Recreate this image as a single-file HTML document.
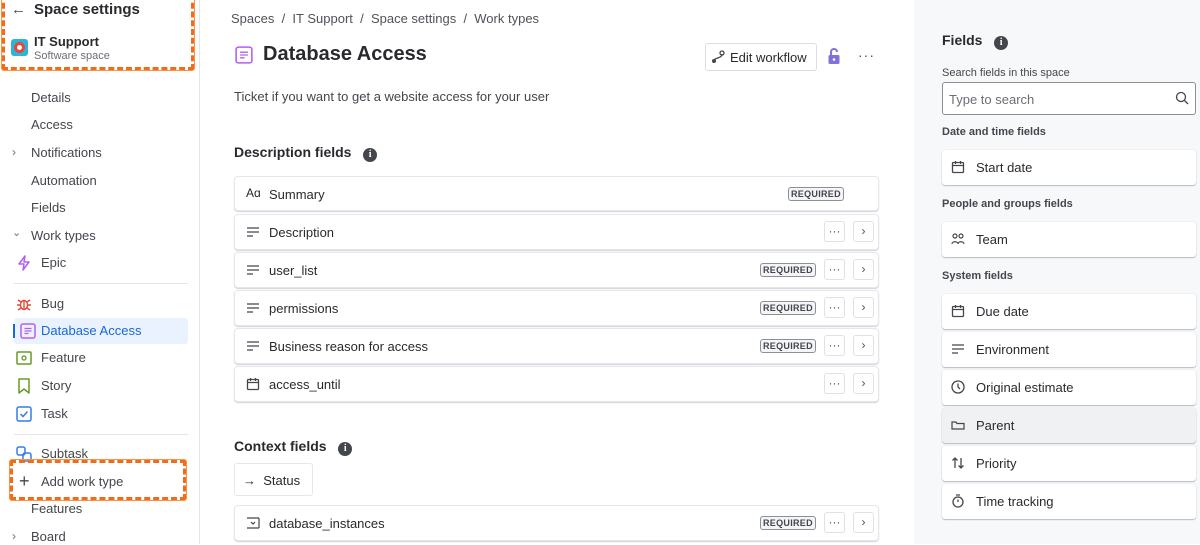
<!DOCTYPE html>
<html><head><meta charset="utf-8"><style>
*{box-sizing:border-box;margin:0;padding:0}
body{width:1200px;height:544px;overflow:hidden;background:#fff;font-family:"Liberation Sans",sans-serif;color:#292a2e;position:relative;font-size:13px}
.a{position:absolute}
.side{left:0;top:0;width:200px;height:544px;border-right:1px solid #e4e5e8}
.nav{position:absolute;left:31px;font-size:13px;color:#44464d;line-height:16px}
.wt{position:absolute;left:41px;font-size:13px;color:#44464d;line-height:16px}
.ic{position:absolute;left:16px;width:16px;height:16px}
.orange{position:absolute;border:3px dashed #f26a1b;border-radius:2px;box-shadow:0 0 0 1px #f7953f}
.row{position:absolute;left:234px;width:645px;height:35px;border:1px solid #e6e7ea;border-radius:4px;box-shadow:0 1px 1px rgba(9,30,66,.2);background:#fff}
.row .t{position:absolute;left:34px;top:10px;font-size:13px;color:#292a2e}
.row .i{position:absolute;left:11px;top:10px;width:14px;height:14px}
.req{position:absolute;font-size:9px;font-weight:bold;letter-spacing:.3px;border:1px solid #8c8f97;border-radius:3px;padding:1px 2px;color:#44464d;background:#f4f5f7;top:10px;line-height:10px}
.btn{position:absolute;width:21px;height:21px;border:1px solid #e0e1e4;border-radius:3px;top:6px;font-size:12px;text-align:center;line-height:18px;color:#505258;background:#fff}
.card{position:absolute;left:942px;width:254px;height:35px;background:#fff;border-radius:3px;box-shadow:0 1px 1px rgba(9,30,66,.25),0 0 1px rgba(9,30,66,.2)}
.card .t{position:absolute;left:34px;top:10px;font-size:13px}
.card svg{position:absolute;left:9px;top:10px}
.lbl{position:absolute;left:942px;font-size:11px;font-weight:bold;color:#44464d}
.h{font-weight:bold;font-size:14px;position:absolute}
.info{display:inline-block;width:14px;height:14px;border-radius:50%;background:#44464d;color:#fff;font-size:10px;text-align:center;line-height:14px;font-weight:bold;font-family:"Liberation Serif",serif}
</style></head><body>
<div class="a side"></div>
<div class="a" style="left:11px;top:1px;font-size:15px;color:#44464d">←</div>
<div class="a" style="left:34px;top:1px;font-size:15px;font-weight:bold">Space settings</div>
<div class="a" style="left:11px;top:39px;width:17px;height:17px;border-radius:3px;background:#2cb5d8"><div style="position:absolute;left:3px;top:3px;width:11px;height:11px;border-radius:50%;border:3px solid #e5493a;background:#fff"></div></div>
<div class="a" style="left:34px;top:34px;font-size:13px;font-weight:bold">IT Support</div>
<div class="a" style="left:34px;top:50px;font-size:11px;color:#6b6e76">Software space</div>
<div class="orange" style="left:2px;top:-6px;width:192px;height:76px"></div>

<div class="nav" style="top:90px">Details</div>
<div class="nav" style="top:117px">Access</div>
<div class="a" style="left:12px;top:145px;color:#6b6e76;font-size:12px">›</div>
<div class="nav" style="top:145px">Notifications</div>
<div class="nav" style="top:173px">Automation</div>
<div class="nav" style="top:200px">Fields</div>
<div class="a" style="left:12px;top:226px;color:#6b6e76;font-size:11px">⌄</div>
<div class="nav" style="top:228px">Work types</div>
<svg class="ic" style="top:255px" viewBox="0 0 16 16"><path d="M9 1L3 9h5l-1 6 6-8H8z" fill="none" stroke="#b45ff2" stroke-width="1.5" stroke-linejoin="round"/></svg>
<div class="wt" style="top:255px">Epic</div>
<div class="a" style="left:14px;top:283px;width:174px;height:1px;background:#e4e5e8"></div>
<svg class="ic" style="top:296px" viewBox="0 0 16 16"><g fill="none" stroke="#e5493a" stroke-width="1.4"><ellipse cx="8" cy="9" rx="3.5" ry="4.5"/><path d="M1 9h3.5M11.5 9H15M2 4l3 2M14 4l-3 2M2 14l3-2M14 14l-3-2M8 5v8"/></g></svg>
<div class="wt" style="top:296px">Bug</div>
<div class="a" style="left:14px;top:318px;width:174px;height:26px;background:#e9f2fe;border-radius:3px"></div>
<div class="a" style="left:13px;top:324px;width:2px;height:14px;background:#1868db"></div>
<svg class="ic" style="top:323px;left:20px" viewBox="0 0 16 16"><rect x="1" y="1" width="14" height="14" rx="2" fill="none" stroke="#b45ff2" stroke-width="1.5"/><path d="M4.5 5.5h7M4.5 8h7M4.5 10.5h4" stroke="#b45ff2" stroke-width="1.3"/></svg>
<div class="wt" style="top:323px;color:#1868db">Database Access</div>
<svg class="ic" style="top:350px" viewBox="0 0 16 16"><rect x="1" y="2" width="14" height="12" rx="1" fill="none" stroke="#6a9a23" stroke-width="1.5"/><circle cx="8" cy="8" r="2" fill="none" stroke="#6a9a23" stroke-width="1.3"/></svg>
<div class="wt" style="top:350px">Feature</div>
<svg class="ic" style="top:378px" viewBox="0 0 16 16"><path d="M3 1h10v14l-5-4-5 4z" fill="none" stroke="#6a9a23" stroke-width="1.5" stroke-linejoin="round"/></svg>
<div class="wt" style="top:378px">Story</div>
<svg class="ic" style="top:406px" viewBox="0 0 16 16"><rect x="1" y="1" width="14" height="14" rx="2" fill="none" stroke="#357de8" stroke-width="1.5"/><path d="M4.5 8l2.5 2.5 4.5-5" fill="none" stroke="#357de8" stroke-width="1.5"/></svg>
<div class="wt" style="top:406px">Task</div>
<div class="a" style="left:14px;top:434px;width:174px;height:1px;background:#e4e5e8"></div>
<svg class="ic" style="top:446px" viewBox="0 0 16 16"><rect x="1" y="1" width="8" height="8" rx="2" fill="none" stroke="#357de8" stroke-width="1.5"/><rect x="7" y="7" width="8" height="8" rx="2" fill="none" stroke="#357de8" stroke-width="1.5"/></svg>
<div class="wt" style="top:446px">Subtask</div>
<div class="a" style="left:19px;top:472px;font-size:18px;color:#44464d;line-height:18px">+</div>
<div class="wt" style="top:474px">Add work type</div>
<div class="orange" style="left:10px;top:460px;width:176px;height:40px"></div>
<div class="nav" style="top:501px">Features</div>
<div class="a" style="left:12px;top:529px;color:#6b6e76;font-size:12px">›</div>
<div class="nav" style="top:529px">Board</div>

<!-- main -->
<div class="a" style="left:231px;top:11px;font-size:13px;color:#505258">Spaces &nbsp;/&nbsp; IT Support &nbsp;/&nbsp; Space settings &nbsp;/&nbsp; Work types</div>
<svg class="a" style="left:235px;top:46px" width="18" height="18" viewBox="0 0 16 16"><rect x="1" y="1" width="14" height="14" rx="2" fill="none" stroke="#b45ff2" stroke-width="1.4"/><path d="M4.5 5.5h7M4.5 8h7M4.5 10.5h4" stroke="#b45ff2" stroke-width="1.2"/></svg>
<div class="a" style="left:263px;top:43px;font-size:20px;font-weight:bold">Database Access</div>
<div class="a" style="left:705px;top:43px;width:112px;height:28px;border:1px solid #dcdde0;border-radius:3px;font-size:13px;padding:6px 0 0 24px">Edit workflow</div>
<svg class="a" style="left:711px;top:50px" width="14" height="14" viewBox="0 0 14 14"><path d="M3 11c0-4 8-2 8-7" fill="none" stroke="#44464d" stroke-width="1.3"/><circle cx="3" cy="11" r="2" fill="#44464d"/><circle cx="11" cy="3" r="2" fill="none" stroke="#44464d" stroke-width="1.3"/></svg>
<svg class="a" style="left:827px;top:47px" width="14" height="18" viewBox="0 0 14 18"><path d="M4 8V5a3 3 0 0 1 6 0" fill="none" stroke="#8270db" stroke-width="2"/><rect x="1.5" y="8" width="11" height="9" rx="1.5" fill="#8270db"/><circle cx="7" cy="12.5" r="1.3" fill="#fff"/></svg>
<div class="a" style="left:858px;top:47px;font-size:14px;color:#505258;letter-spacing:1px">···</div>
<div class="a" style="left:234px;top:89px;font-size:13px;color:#44464d">Ticket if you want to get a website access for your user</div>

<div class="h" style="left:234px;top:144px">Description fields &nbsp;&nbsp;<span class="info">i</span></div>

<div class="row" style="top:176px"><div class="i" style="font-size:12px;top:9px;width:auto">Aɑ</div><div class="t">Summary</div><div class="req" style="left:553px">REQUIRED</div></div>
<div class="row" style="top:214px;height:36px"><svg class="i" viewBox="0 0 14 14"><path d="M1 3h12M1 7h12M1 11h6" stroke="#44464d" stroke-width="1.3"/></svg><div class="t">Description</div><div class="btn" style="left:589px">···</div><div class="btn" style="left:618px">›</div></div>
<div class="row" style="top:252px;height:36px"><svg class="i" viewBox="0 0 14 14"><path d="M1 3h12M1 7h12M1 11h6" stroke="#44464d" stroke-width="1.3"/></svg><div class="t">user_list</div><div class="req" style="left:525px">REQUIRED</div><div class="btn" style="left:589px">···</div><div class="btn" style="left:618px">›</div></div>
<div class="row" style="top:290px;height:36px"><svg class="i" viewBox="0 0 14 14"><path d="M1 3h12M1 7h12M1 11h6" stroke="#44464d" stroke-width="1.3"/></svg><div class="t">permissions</div><div class="req" style="left:525px">REQUIRED</div><div class="btn" style="left:589px">···</div><div class="btn" style="left:618px">›</div></div>
<div class="row" style="top:328px;height:36px"><svg class="i" viewBox="0 0 14 14"><path d="M1 3h12M1 7h12M1 11h6" stroke="#44464d" stroke-width="1.3"/></svg><div class="t">Business reason for access</div><div class="req" style="left:525px">REQUIRED</div><div class="btn" style="left:589px">···</div><div class="btn" style="left:618px">›</div></div>
<div class="row" style="top:366px;height:36px"><svg class="i" viewBox="0 0 14 14"><rect x="1.5" y="2.5" width="11" height="10" rx="1" fill="none" stroke="#44464d" stroke-width="1.3"/><path d="M1.5 5.5h11M4.5 1v3M9.5 1v3" stroke="#44464d" stroke-width="1.3"/></svg><div class="t">access_until</div><div class="btn" style="left:589px">···</div><div class="btn" style="left:618px">›</div></div>

<div class="h" style="left:234px;top:438px">Context fields &nbsp;&nbsp;<span class="info">i</span></div>
<div class="a" style="left:234px;top:463px;width:79px;height:33px;border:1px solid #e6e7ea;border-radius:3px;font-size:13px;padding:9px 0 0 8px">→ &nbsp;Status</div>
<div class="row" style="top:505px;height:36px"><svg class="i" viewBox="0 0 14 14"><path d="M1 2h12M1 12h12M13 2v10" stroke="#44464d" stroke-width="1.2" fill="none"/><path d="M5 6l2 2 2-2" stroke="#44464d" stroke-width="1.2" fill="none"/></svg><div class="t">database_instances</div><div class="req" style="left:525px">REQUIRED</div><div class="btn" style="left:589px">···</div><div class="btn" style="left:618px">›</div></div>

<!-- right panel -->
<div class="a" style="left:914px;top:0;width:286px;height:544px;background:#f7f8f9"></div>
<div class="h" style="left:942px;top:32px">Fields &nbsp;&nbsp;<span class="info">i</span></div>
<div class="a" style="left:942px;top:67px;font-size:11px;color:#44464d">Search fields in this space</div>
<div class="a" style="left:942px;top:82px;width:254px;height:33px;background:#fff;border:1px solid #8c8f97;border-radius:3px;font-size:13px;color:#6b6e76;padding:9px 0 0 6px">Type to search</div>
<svg class="a" style="left:1175px;top:91px" width="14" height="14" viewBox="0 0 14 14"><circle cx="6" cy="6" r="4.5" fill="none" stroke="#44464d" stroke-width="1.3"/><path d="M9.5 9.5L13 13" stroke="#44464d" stroke-width="1.3"/></svg>
<div class="lbl" style="top:126px">Date and time fields</div>
<div class="card" style="top:150px"><svg width="14" height="14" viewBox="0 0 14 14"><rect x="1.5" y="2.5" width="11" height="10" rx="1" fill="none" stroke="#44464d" stroke-width="1.3"/><path d="M1.5 5.5h11M4.5 1v3M9.5 1v3" stroke="#44464d" stroke-width="1.3"/></svg><div class="t">Start date</div></div>
<div class="lbl" style="top:198px">People and groups fields</div>
<div class="card" style="top:222px"><svg width="14" height="14" viewBox="0 0 14 14"><g fill="none" stroke="#44464d" stroke-width="1.2"><circle cx="4" cy="4" r="2"/><circle cx="10" cy="4" r="2"/><path d="M1 12c0-3 6-3 6 0M7 12c0-3 6-3 6 0"/></g></svg><div class="t">Team</div></div>
<div class="lbl" style="top:270px">System fields</div>
<div class="card" style="top:294px"><svg width="14" height="14" viewBox="0 0 14 14"><rect x="1.5" y="2.5" width="11" height="10" rx="1" fill="none" stroke="#44464d" stroke-width="1.3"/><path d="M1.5 5.5h11M4.5 1v3M9.5 1v3" stroke="#44464d" stroke-width="1.3"/></svg><div class="t">Due date</div></div>
<div class="card" style="top:332px"><svg width="14" height="14" viewBox="0 0 14 14"><path d="M1 3h12M1 7h12M1 11h6" stroke="#44464d" stroke-width="1.3"/></svg><div class="t">Environment</div></div>
<div class="card" style="top:370px"><svg width="14" height="14" viewBox="0 0 14 14"><circle cx="7" cy="7" r="6" fill="none" stroke="#44464d" stroke-width="1.3"/><path d="M7 3.5V7l2 2" fill="none" stroke="#44464d" stroke-width="1.3"/></svg><div class="t">Original estimate</div></div>
<div class="card" style="top:408px;background:#f0f1f2"><svg width="14" height="14" viewBox="0 0 14 14"><path d="M1 4h4l1 1.5h7V11H1z" fill="none" stroke="#44464d" stroke-width="1.2"/></svg><div class="t">Parent</div></div>
<div class="card" style="top:446px"><svg width="14" height="14" viewBox="0 0 14 14"><path d="M4 12V2M1.5 4.5L4 2l2.5 2.5M10 2v10M7.5 9.5L10 12l2.5-2.5" fill="none" stroke="#44464d" stroke-width="1.3"/></svg><div class="t">Priority</div></div>
<div class="card" style="top:484px"><svg width="14" height="14" viewBox="0 0 14 14"><circle cx="7" cy="8" r="5" fill="none" stroke="#44464d" stroke-width="1.3"/><path d="M5 1h4M7 8V5.5" stroke="#44464d" stroke-width="1.3"/></svg><div class="t">Time tracking</div></div>
</body></html>
